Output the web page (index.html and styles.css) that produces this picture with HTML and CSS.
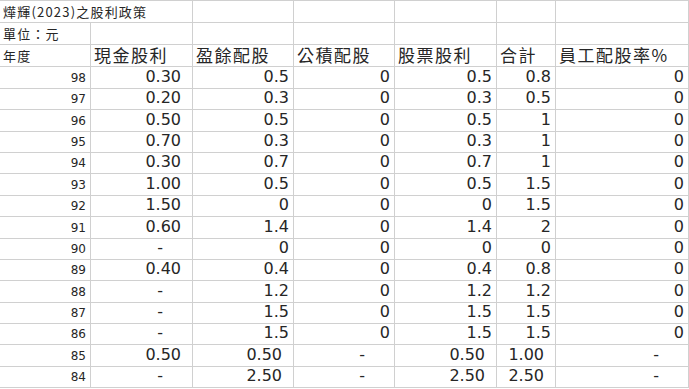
FILE: index.html
```html
<!DOCTYPE html>
<html lang="zh-Hant">
<head>
<meta charset="utf-8">
<title>燁輝(2023)之股利政策</title>
<link rel="stylesheet" href="styles.css">
</head>
<body>
<div class="sheet">
  <div class="c t span2">燁輝(2023)之股利政策</div><div class="c"></div><div class="c"></div><div class="c"></div><div class="c"></div><div class="c last"></div>
  <div class="c t">單位：元</div><div class="c"></div><div class="c"></div><div class="c"></div><div class="c"></div><div class="c"></div><div class="c last"></div>
  <div class="c t">年度</div><div class="c h">現金股利</div><div class="c h">盈餘配股</div><div class="c h">公積配股</div><div class="c h">股票股利</div><div class="c h">合計</div><div class="c h last">員工配股率%</div>

  <div class="c y">98</div><div class="c n acc">0.30</div><div class="c n">0.5</div><div class="c n">0</div><div class="c n">0.5</div><div class="c n">0.8</div><div class="c n last">0</div>
  <div class="c y">97</div><div class="c n acc">0.20</div><div class="c n">0.3</div><div class="c n">0</div><div class="c n">0.3</div><div class="c n">0.5</div><div class="c n last">0</div>
  <div class="c y">96</div><div class="c n acc">0.50</div><div class="c n">0.5</div><div class="c n">0</div><div class="c n">0.5</div><div class="c n">1</div><div class="c n last">0</div>
  <div class="c y">95</div><div class="c n acc">0.70</div><div class="c n">0.3</div><div class="c n">0</div><div class="c n">0.3</div><div class="c n">1</div><div class="c n last">0</div>
  <div class="c y">94</div><div class="c n acc">0.30</div><div class="c n">0.7</div><div class="c n">0</div><div class="c n">0.7</div><div class="c n">1</div><div class="c n last">0</div>
  <div class="c y">93</div><div class="c n acc">1.00</div><div class="c n">0.5</div><div class="c n">0</div><div class="c n">0.5</div><div class="c n">1.5</div><div class="c n last">0</div>
  <div class="c y">92</div><div class="c n acc">1.50</div><div class="c n">0</div><div class="c n">0</div><div class="c n">0</div><div class="c n">1.5</div><div class="c n last">0</div>
  <div class="c y">91</div><div class="c n acc">0.60</div><div class="c n">1.4</div><div class="c n">0</div><div class="c n">1.4</div><div class="c n">2</div><div class="c n last">0</div>
  <div class="c y">90</div><div class="c n dash">-</div><div class="c n">0</div><div class="c n">0</div><div class="c n">0</div><div class="c n">0</div><div class="c n last">0</div>
  <div class="c y">89</div><div class="c n acc">0.40</div><div class="c n">0.4</div><div class="c n">0</div><div class="c n">0.4</div><div class="c n">0.8</div><div class="c n last">0</div>
  <div class="c y">88</div><div class="c n dash">-</div><div class="c n">1.2</div><div class="c n">0</div><div class="c n">1.2</div><div class="c n">1.2</div><div class="c n last">0</div>
  <div class="c y">87</div><div class="c n dash">-</div><div class="c n">1.5</div><div class="c n">0</div><div class="c n">1.5</div><div class="c n">1.5</div><div class="c n last">0</div>
  <div class="c y">86</div><div class="c n dash">-</div><div class="c n">1.5</div><div class="c n">0</div><div class="c n">1.5</div><div class="c n">1.5</div><div class="c n last">0</div>
  <div class="c y">85</div><div class="c n acc">0.50</div><div class="c n acc">0.50</div><div class="c n dash">-</div><div class="c n acc">0.50</div><div class="c n acc">1.00</div><div class="c n dash last">-</div>
  <div class="c y">84</div><div class="c n dash">-</div><div class="c n acc">2.50</div><div class="c n dash">-</div><div class="c n acc">2.50</div><div class="c n acc">2.50</div><div class="c n dash last">-</div>
</div>
</body>
</html>
```

FILE: styles.css
```css
html, body {
  margin: 0;
  padding: 0;
  background: #ffffff;
}

.sheet {
  display: grid;
  width: 689px;
  grid-template-columns: 91px 102px 101px 101px 102px 59px 133px;
  grid-template-rows: 22px 22px 22px 22px 21px 22px 21px 21px 22px 21px 22px 21px 21px 22px 21px 21px 22px 21px;
  border-top: 1px solid #d0d0d0;
  color: #262626;
  font-family: "DejaVu Sans", "Noto Sans CJK TC", sans-serif;
}

.c {
  box-sizing: border-box;
  border-right: 1px solid #d0d0d0;
  border-bottom: 1px solid #d0d0d0;
  display: flex;
  align-items: flex-end;
  white-space: nowrap;
  overflow: visible;
  min-width: 0;
}

.span2 {
  grid-column: span 2;
}

.t {
  font-family: "Noto Sans CJK TC", sans-serif;
  font-size: 13px;
  letter-spacing: 1.2px;
  padding: 0 0 2px 3px;
  line-height: 16px;
}

.h {
  font-family: "Noto Sans CJK TC", sans-serif;
  font-size: 17px;
  letter-spacing: 1.5px;
  line-height: 20px;
  padding: 0 0 1px 3px;
}

.y {
  justify-content: flex-end;
  font-size: 12px;
  line-height: 14px;
  padding: 0 4px 3px 0;
}

.n {
  justify-content: flex-end;
  font-size: 16px;
  line-height: 18px;
  padding: 0 4px 2px 0;
}

.n.acc {
  padding-right: 11px;
}

.n.dash {
  padding-right: 29px;
}
```
